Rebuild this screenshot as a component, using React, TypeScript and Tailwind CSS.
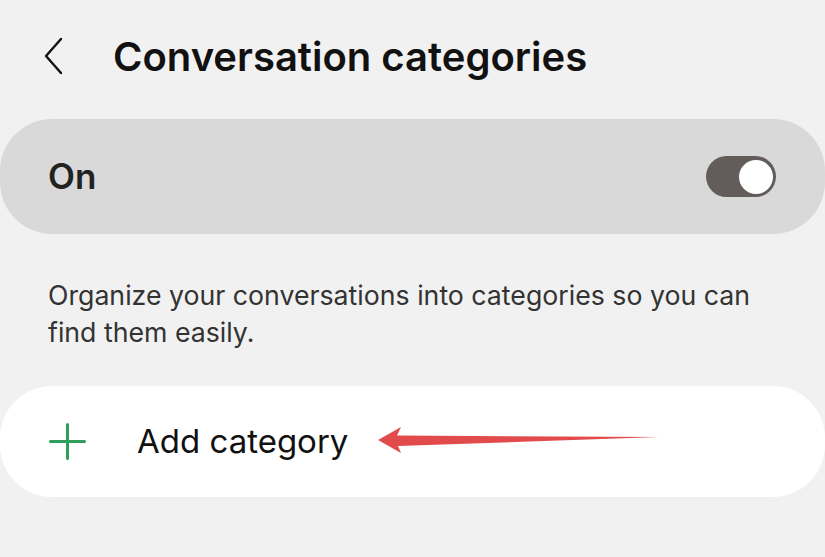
import React, { useState } from 'react';

function Toggle({ on, onChange }: { on: boolean; onChange: () => void }) {
  return (
    <button
      onClick={onChange}
      className={`flex h-[41px] w-[70px] items-center rounded-full px-[3px] ${on ? 'justify-end bg-[#625c5a]' : 'justify-start bg-[#8e8a89]'}`}
    >
      <span className="h-[34px] w-[34px] rounded-full bg-white" />
    </button>
  );
}

export default function App() {
  const [enabled, setEnabled] = useState(true);

  return (
    <div className="h-[557px] w-[825px] overflow-hidden bg-[#f2f1f2] font-['Inter',sans-serif] text-[#111]">
      {/* Header */}
      <div className="flex h-[119px] items-start pt-[33px]">
        <button className="ml-[40px] mt-[3px] flex h-[40px] w-[26px] items-center justify-center">
          <svg width="22" height="38" viewBox="0 0 22 38" fill="none">
            <path d="M19 2 L4 19 L19 36" stroke="#111" strokeWidth="2.4" strokeLinecap="round" strokeLinejoin="round" />
          </svg>
        </button>
        <h1 className="ml-[47px] text-[40px] font-semibold leading-[48px]">
          Conversation categories
        </h1>
      </div>

      {/* Master switch */}
      <div className="flex h-[115px] items-center justify-between rounded-[52px] bg-[#d9d9d9] pl-[48px] pr-[49px]">
        <span className="text-[35px] font-semibold text-[#222]">On</span>
        <Toggle on={enabled} onChange={() => setEnabled(!enabled)} />
      </div>

      {/* Description */}
      <p className="px-[48px] pt-[43px] text-[26.7px] leading-[37px] text-[#333]">
        Organize your conversations into categories so you can
        <br />
        find them easily.
      </p>

      {/* Add category */}
      <div className="relative mt-[35px] flex h-[111px] items-center rounded-[52px] bg-white pl-[49px]">
        <svg width="37" height="37" viewBox="0 0 37 37" fill="none">
          <path d="M18.5 1.5 V35.5 M1.5 18.5 H35.5" stroke="#2e9e5a" strokeWidth="3" strokeLinecap="round" />
        </svg>
        <span className="ml-[51px] text-[33px] text-[#111]">Add category</span>
        <svg className="absolute left-[378px] top-[41px]" width="282" height="27" viewBox="0 0 282 27">
          <path d="M0 13 L23 0 L19 8.5 L281 10 L20 19 L23 26 Z" fill="#e24b4b" />
        </svg>
      </div>
    </div>
  );
}
